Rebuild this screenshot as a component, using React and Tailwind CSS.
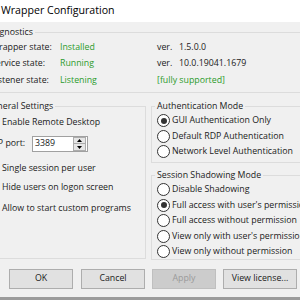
function Radio({ checked, label }) {
  return (
    <div className="flex items-center h-[15.5px] whitespace-nowrap">
      <span className="w-[13px] h-[13px] rounded-full border border-[#333333] bg-white flex items-center justify-center shrink-0">
        {checked && <span className="w-[6px] h-[6px] rounded-full bg-[#333333]" />}
      </span>
      <span className="ml-[2px]">{label}</span>
    </div>
  );
}

function Check({ checked, label, className }) {
  return (
    <div className={`flex items-center h-[16px] whitespace-nowrap ${className}`}>
      <span className="w-[13px] h-[13px] border border-[#333333] bg-white shrink-0 flex items-center justify-center text-[9px] leading-none">
        {checked ? "✓" : ""}
      </span>
      <span className="ml-[3px]">{label}</span>
    </div>
  );
}

export default function App() {
  return (
    <div className="w-[300px] h-[300px] overflow-hidden bg-[#f0f0f0] font-['Open_Sans',sans-serif] text-[8.8px] text-[#1b1b1b] flex flex-col">
      <div className="h-[22px] bg-white shrink-0 flex items-center pl-[1px] text-[10.6px] text-black whitespace-nowrap">
        Wrapper Configuration
      </div>
      <div className="-ml-[20px] w-[340px] flex flex-col shrink-0">
        <fieldset className="mt-[4px] border border-[#dcdcdc] pb-[3px] pl-[10px] w-[340px]">
          <legend className="-ml-[7px] px-[2px] leading-[12px]">Diagnostics</legend>
          <div className="flex items-center h-[16px] mt-[2px] whitespace-nowrap">
            <span className="w-[69px]">Wrapper state:</span>
            <span className="w-[97px] text-[#2b9b2b]">Installed</span>
            <span className="w-[22px]">ver.</span>
            <span>1.5.0.0</span>
          </div>
          <div className="flex items-center h-[16px] whitespace-nowrap">
            <span className="w-[69px]">Service state:</span>
            <span className="w-[97px] text-[#2b9b2b]">Running</span>
            <span className="w-[22px]">ver.</span>
            <span>10.0.19041.1679</span>
          </div>
          <div className="flex items-center h-[16px] mt-[1px] whitespace-nowrap">
            <span className="w-[69px]">Listener state:</span>
            <span className="w-[97px] text-[#2b9b2b]">Listening</span>
            <span className="text-[#2b9b2b]">[fully supported]</span>
          </div>
        </fieldset>

        <div className="flex items-start gap-[5px] mt-[7px]">
          <fieldset className="w-[166px] h-[159px] border border-[#dcdcdc] pl-[5px] shrink-0">
            <legend className="-ml-[2px] px-[2px] leading-[12px]">General Settings</legend>
            <Check checked label="Enable Remote Desktop" className="mt-[3px]" />
            <div className="flex items-center h-[16px] mt-[5px] whitespace-nowrap">
              <span className="w-[46px]">RDP port:</span>
              <div className="w-[56px] h-[16px] border border-[#a0a0a0] bg-white flex items-center justify-between pl-[2px] pr-[1px]">
                <span>3389</span>
                <div className="w-[13px] h-[14px] flex flex-col">
                  <div className="h-[7px] bg-[#e6e6e6] border border-[#acacac] flex items-center justify-center">
                    <svg width="5" height="3" viewBox="0 0 5 3"><path d="M0 3 L2.5 0 L5 3 Z" fill="#000" /></svg>
                  </div>
                  <div className="h-[7px] bg-[#e6e6e6] border border-t-0 border-[#acacac] flex items-center justify-center">
                    <svg width="5" height="3" viewBox="0 0 5 3"><path d="M0 0 L2.5 3 L5 0 Z" fill="#000" /></svg>
                  </div>
                </div>
              </div>
            </div>
            <Check label="Single session per user" className="mt-[9px]" />
            <Check label="Hide users on logon screen" className="mt-[3px]" />
            <Check label="Allow to start custom programs" className="mt-[5px]" />
          </fieldset>

          <div className="flex flex-col w-[170px] shrink-0">
            <fieldset className="h-[63px] border border-[#dcdcdc] pl-[5px]">
              <legend className="-ml-[2px] px-[2px] leading-[12px]">Authentication Mode</legend>
              <div className="mt-[1px]">
                <Radio checked label="GUI Authentication Only" />
                <Radio label="Default RDP Authentication" />
                <Radio label="Network Level Authentication" />
              </div>
            </fieldset>
            <fieldset className="mt-[6px] h-[91px] border border-[#dcdcdc] pl-[5px]">
              <legend className="-ml-[2px] px-[2px] leading-[12px]">Session Shadowing Mode</legend>
              <div className="mt-[1px]">
                <Radio label="Disable Shadowing" />
                <Radio checked label="Full access with user's permission" />
                <Radio label="Full access without permission" />
                <Radio label="View only with user's permission" />
                <Radio label="View only without permission" />
              </div>
            </fieldset>
          </div>
        </div>

        <div className="flex mt-[9px] pl-[29px] whitespace-nowrap">
          <button className="w-[64px] h-[20px] bg-[#e1e1e1] border border-[#adadad] text-[#1b1b1b]">OK</button>
          <button className="ml-[8px] w-[64px] h-[20px] bg-[#e1e1e1] border border-[#adadad] text-[#1b1b1b]">Cancel</button>
          <button className="ml-[7px] w-[64px] h-[20px] bg-[#cccccc] border border-[#bfbfbf] text-[#9a9a9a]">Apply</button>
          <button className="ml-[7px] w-[74px] h-[20px] bg-[#e1e1e1] border border-[#adadad] text-[#1b1b1b]">View license...</button>
        </div>
      </div>
      <div className="flex-1" />
      <div className="h-[3px] bg-[#9b9b9b] shrink-0" />
    </div>
  );
}
